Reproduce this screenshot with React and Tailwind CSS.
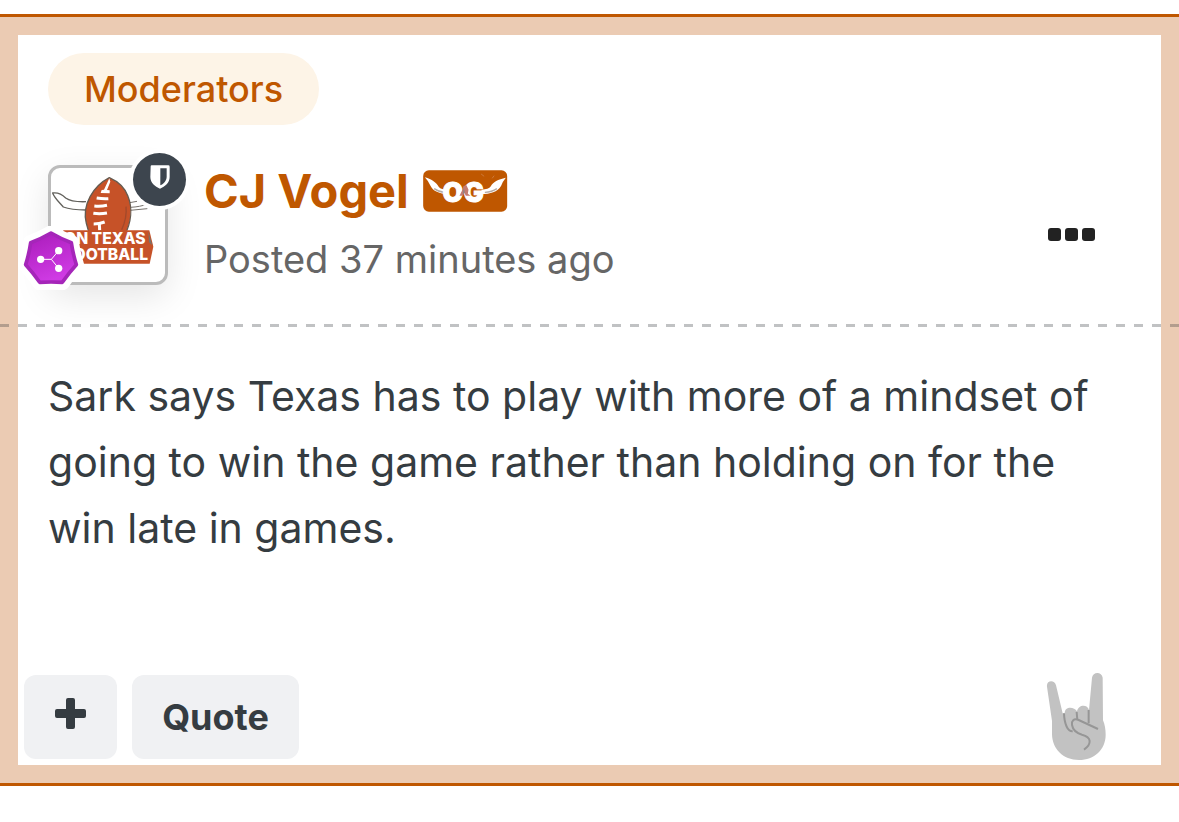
const post = {
  group: "Moderators",
  author: "CJ Vogel",
  time: "Posted 37 minutes ago",
  body: "Sark says Texas has to play with more of a mindset of going to win the game rather than holding on for the win late in games.",
};

function App() {
  return (
    <main className="bg-white py-3.5 font-['Inter',sans-serif]">
      <article className="border-y-3 border-[#bf5700]">
        <div className="border-18 border-[#ebcbb3]">
          <PostHeader post={post} />
          <div className="-mx-[18px] h-[3px] bg-[repeating-linear-gradient(90deg,rgba(40,45,50,0.29)_0_9px,transparent_9px_18px)]" />
          <p className="px-[30px] pt-9 text-[41px] leading-[66px] text-[#353c41]">
            {post.body}
          </p>
          <PostFooter />
        </div>
      </article>
    </main>
  );
}

function PostHeader({ post }) {
  return (
    <header className="px-[30px] pt-[18px] pb-[31px]">
      <a
        href="#moderators"
        className="inline-flex h-[72px] items-center rounded-full bg-[#fdf4e7] px-9 align-top text-[36px] font-medium text-[#bf5700]"
      >
        {post.group}
      </a>
      <div className="mt-8 flex items-center">
        <Avatar />
        <div className="ml-9 grow">
          <div className="flex items-center gap-3.5">
            <h3 className="text-[47px] leading-[68px] font-bold text-[#bf5700]">
              <a href="#profile">{post.author}</a>
            </h3>
            <OgBadge />
          </div>
          <a
            href="#post"
            className="block text-[38px] leading-[68px] text-[#666666]"
          >
            {post.time}
          </a>
        </div>
        <button aria-label="More options" className="mt-4.5 mr-9 flex gap-1 py-4">
          <span className="size-[13px] rounded-[3px] bg-[#222222]" />
          <span className="size-[13px] rounded-[3px] bg-[#222222]" />
          <span className="size-[13px] rounded-[3px] bg-[#222222]" />
        </button>
      </div>
    </header>
  );
}

function Avatar() {
  return (
    <a
      href="#profile"
      aria-label="CJ Vogel"
      className="relative block size-[120px] shrink-0 rounded-xl border-3 border-[#bbbbbb] bg-white shadow-[0_12px_36px_rgba(0,0,0,0.1)]"
    >
      <TeamLogo />
      <span className="absolute -top-[15px] -right-[21px] flex size-[53px] items-center justify-center rounded-full bg-[#3d454e] shadow-[0_0_0_4px_white]">
        <svg viewBox="0 0 60 72" className="mb-1.5 h-6 w-5">
          <path
            d="M2 4Q2 1 5 1H55Q59 1 59 5V36C59 53 45 65 30 71C15 65 1 53 1 36Z"
            fill="white"
          />
          <path d="M31 10H50V35C50 47 41 56 31 61Z" fill="#3d454e" />
        </svg>
      </span>
      <RankBadge />
    </a>
  );
}

function TeamLogo() {
  return (
    <svg viewBox="153 114 342 342" className="size-full">
      {/* horns */}
      <path
        d="M258 215C231 216 211 214 197 204C187 194 171 187 158 189C163 204 177 216 190 231C211 239 235 240 258 240"
        fill="white"
        stroke="#62615c"
        strokeWidth="4"
        strokeLinejoin="round"
      />
      <path
        d="M389 218L411 214M391 232C411 231 426 228 444 222M390 241L442 236"
        fill="none"
        stroke="#77736e"
        strokeWidth="3"
      />
      {/* ball */}
      <path
        d="M328 143C280 168 245 224 259 280C262 294 266 305 272 315H374C394 278 398 235 384 199C374 171 353 154 328 143Z"
        fill="#c65228"
        stroke="#655b50"
        strokeWidth="4"
      />
      <path
        d="M378 230C381 259 374 280 365 299"
        fill="none"
        stroke="#a2492b"
        strokeWidth="4"
      />
      <path
        d="M328 145L331 155L321 180L329 181V190L302 189L305 180L312 179Z"
        fill="white"
      />
      <path
        d="M290 204Q308 207 325 206M283 228Q302 230 321 226M280 250Q301 253 321 249M281 282Q298 282 314 276"
        fill="none"
        stroke="white"
        strokeWidth="9"
      />
      <path d="M298 281L299 301" stroke="white" strokeWidth="9" />
      {/* name plate */}
      <path d="M190 301H448L460 350L449 401H190Z" fill="#c65228" />
      <path d="M445 304L457 346L447 337Z" fill="#77736e" />
      <g
        fill="white"
        textAnchor="end"
        className="font-['Inter',sans-serif] font-extrabold"
      >
        <text x="437" y="342" fontSize="47">
          ON TEXAS
        </text>
        <text x="444" y="390" fontSize="47">
          FOOTBALL
        </text>
      </g>
    </svg>
  );
}

function RankBadge() {
  const outline =
    "M153 309Q182 326 214 338Q219 372 229 404Q206 429 187 457Q153 455 119 457Q100 429 77 404Q87 372 92 338Q124 326 153 309Z";
  return (
    <svg
      viewBox="54 288 198 198"
      className="absolute -bottom-[10px] -left-[33px] size-[66px]"
    >
      <defs>
        <linearGradient id="rank" x1="0" y1="0" x2="0.4" y2="1">
          <stop offset="0" stopColor="#a91bb9" />
          <stop offset="1" stopColor="#cf3be4" />
        </linearGradient>
      </defs>
      <path
        d={outline}
        fill="white"
        stroke="white"
        strokeWidth="46"
        strokeLinejoin="round"
      />
      <path
        d={outline}
        fill="url(#rank)"
        stroke="#a526b9"
        strokeWidth="11"
        strokeLinejoin="round"
      />
      <path
        d="M122 388H154L176 362M154 388L176 415"
        fill="none"
        stroke="white"
        strokeWidth="3"
      />
      <circle cx="122" cy="388" r="11" fill="white" />
      <circle cx="176" cy="362" r="11" fill="white" />
      <circle cx="176" cy="415" r="11" fill="white" />
    </svg>
  );
}

function OgBadge() {
  return (
    <svg viewBox="69 63 254 126" className="h-[42px] w-[85px]">
      <rect x="69" y="64" width="252" height="124" rx="17" fill="#bf5700" />
      <path
        d="M74 85C96 91 108 101 116 114Q123 122 142 122V135C119 135 98 127 90 109Q86 98 74 85Z"
        fill="white"
      />
      <path
        d="M317 86C294 91 278 99 272 112Q265 122 244 122V135C270 135 292 129 303 110Q307 98 317 86Z"
        fill="white"
      />
      <path
        d="M102 119Q116 129 134 130M290 119Q275 129 254 130"
        fill="none"
        stroke="#b5aaa3"
        strokeWidth="4"
      />
      <g
        fill="white"
        stroke="white"
        strokeWidth="3"
        className="font-['Inter',sans-serif] font-black"
      >
        <text x="127" y="158" fontSize="80">
          O
        </text>
        <text x="191" y="158" fontSize="80">
          G
        </text>
      </g>
      <path
        d="M190 111L199 109L205 122L203 134L211 140H197L193 132L187 140H178L185 126Z"
        fill="#c47b70"
      />
      <path d="M190 116L194 130L188 137Z" fill="#8f8587" />
      <path d="M243 75L252 82M282 80L276 88" stroke="#cd793a" strokeWidth="3" />
    </svg>
  );
}

function PostFooter() {
  return (
    <footer className="mt-[111px] flex items-center gap-[15px] px-1.5 pb-1">
      <button
        aria-label="Multi-quote"
        className="flex h-21 w-[93px] items-center justify-center rounded-xl bg-[#f0f1f3] pb-1.5"
      >
        <svg viewBox="0 0 31 31" className="size-[31px]">
          <path
            d="M11 2Q11 0 13 0H18Q20 0 20 2V11H29Q31 11 31 13V18Q31 20 29 20H20V29Q20 31 18 31H13Q11 31 11 29V20H2Q0 20 0 18V13Q0 11 2 11H11Z"
            fill="#353c41"
          />
        </svg>
      </button>
      <button className="h-21 w-[167px] rounded-xl bg-[#f0f1f3] text-[36px] font-bold text-[#353c41]">
        Quote
      </button>
      <button aria-label="Hook 'em" className="mr-12 ml-auto">
        <HornsHand />
      </button>
    </footer>
  );
}

function HornsHand() {
  return (
    <svg viewBox="78 66 183 267" className="block h-[89px] w-[61px]">
      <path
        d="M81 110C78 90 104 88 108 106L128 190L134 191C133 168 162 169 171 184C175 162 203 162 207 180L216 83C218 64 246 64 248 83L249 211C254 222 257 238 257 254C257 298 223 330 177 330C129 330 97 297 96 253V213Z"
        fill="#c2c2c2"
      />
      <path
        d="M132 190C133 222 143 245 158 244M170 186L172 210M206 180V220"
        fill="none"
        stroke="#969696"
        strokeWidth="6"
      />
      <path
        d="M234 237L176 210C161 204 154 213 156 225C159 242 169 249 186 254C215 261 216 282 192 299"
        fill="none"
        stroke="#969696"
        strokeWidth="6"
      />
    </svg>
  );
}

export default App;
